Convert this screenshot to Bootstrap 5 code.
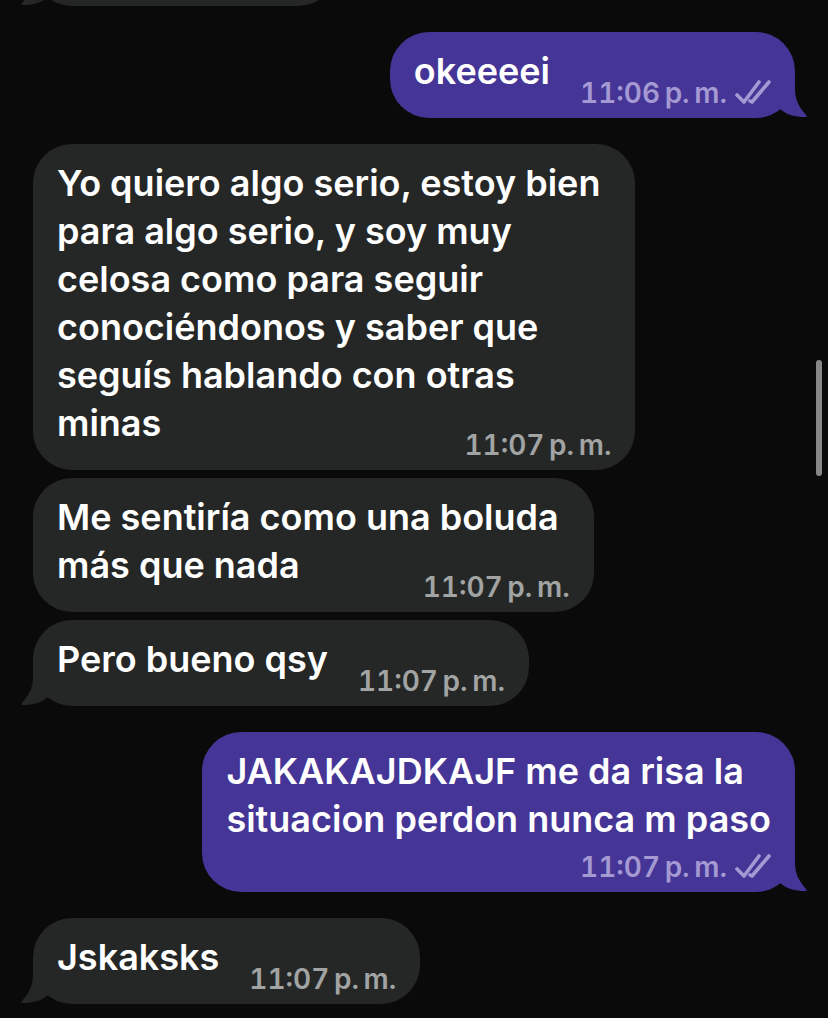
<!DOCTYPE html>
<html lang="es">
<head>
<meta charset="utf-8">
<meta name="viewport" content="width=device-width, initial-scale=1">
<title>Chat</title>
<link href="https://cdn.jsdelivr.net/npm/bootstrap@5.3.0/dist/css/bootstrap.min.css" rel="stylesheet">
<style>
body{background:#0a0a0a;color:#fff;font-family:Inter,"Liberation Sans",sans-serif;font-size:36px;line-height:48px;font-weight:600;overflow-x:hidden}
.chat{padding:0 33px 14px;gap:26px}
.run{gap:8px}
.bubble{background:#252726;border-radius:39px;padding:15px 24px 11px;color:#fff}
.own{background:#443596}
.roomy p{padding-right:11px}
.last-line{gap:30px;min-height:60px}
.stamp{font-size:28px;line-height:28px;font-variant-numeric:tabular-nums;color:#a2a3a3;gap:8px;height:28px}
.own .stamp{color:#a499d2}
.own-row{height:38px}
.earlier{width:304px;height:86px;margin-top:-80px}
.tail{position:absolute;bottom:0;left:-12px;width:32px;height:46px;fill:#252726}
.own .tail{left:auto;right:-12px;fill:#443596;transform:scaleX(-1)}
.thumb{position:fixed;right:6px;top:360px;width:6px;height:116px;background:#878787}
</style>
</head>
<body>
<svg class="d-none" aria-hidden="true">
<symbol id="tail" viewBox="0 0 32 46"><path d="M12 0V16C12 28 8 35 1 43Q-1 45 2 45C12 45 20 43 27 37L32 0Z"/></symbol>
<symbol id="ticks" viewBox="0 0 36 26"><path d="M2 15L9 22L24 2M17 22L34 2M15 21L17 22" fill="none" stroke="currentColor" stroke-width="3.6" stroke-linecap="round" stroke-linejoin="round"/></symbol>
</svg>
<main class="chat d-flex flex-column">
<div class="bubble earlier position-relative" aria-hidden="true"><svg class="tail"><use href="#tail"/></svg></div>

<article class="bubble own position-relative align-self-end">
<svg class="tail" aria-hidden="true"><use href="#tail"/></svg>
<div class="last-line d-flex align-items-end justify-content-between"><span class="align-self-start">okeeeei</span><span class="stamp d-flex align-items-center"><time>11:06&#8239;p.&#8239;m.</time><svg width="36" height="26" role="img" aria-label="Leído"><use href="#ticks"/></svg></span></div>
</article>

<section class="run d-flex flex-column align-items-start">
<article class="bubble roomy">
<p class="mb-0">Yo quiero algo serio, estoy bien<br>para algo serio, y soy muy<br>celosa como para seguir<br>conociéndonos y saber que<br>seguís hablando con otras</p>
<div class="last-line d-flex align-items-end justify-content-between"><span class="align-self-start">minas</span><time class="stamp">11:07&#8239;p.&#8239;m.</time></div>
</article>
<article class="bubble roomy">
<p class="mb-0">Me sentiría como una boluda</p>
<div class="last-line d-flex align-items-end justify-content-between"><span class="align-self-start">más que nada</span><time class="stamp">11:07&#8239;p.&#8239;m.</time></div>
</article>
<article class="bubble position-relative">
<svg class="tail" aria-hidden="true"><use href="#tail"/></svg>
<div class="last-line d-flex align-items-end justify-content-between"><span class="align-self-start">Pero bueno qsy</span><time class="stamp">11:07&#8239;p.&#8239;m.</time></div>
</article>
</section>

<article class="bubble own position-relative align-self-end">
<svg class="tail" aria-hidden="true"><use href="#tail"/></svg>
<p class="mb-0">JAKAKAJDKAJF me da risa la<br>situacion perdon nunca m paso</p>
<div class="own-row d-flex align-items-end justify-content-end"><span class="stamp d-flex align-items-center"><time>11:07&#8239;p.&#8239;m.</time><svg width="36" height="26" role="img" aria-label="Leído"><use href="#ticks"/></svg></span></div>
</article>

<article class="bubble position-relative align-self-start">
<svg class="tail" aria-hidden="true"><use href="#tail"/></svg>
<div class="last-line d-flex align-items-end justify-content-between"><span class="align-self-start">Jskaksks</span><time class="stamp">11:07&#8239;p.&#8239;m.</time></div>
</article>
</main>
<div class="thumb rounded-pill" aria-hidden="true"></div>
<script src="https://cdn.jsdelivr.net/npm/bootstrap@5.3.0/dist/js/bootstrap.bundle.min.js"></script>
</body>
</html>
